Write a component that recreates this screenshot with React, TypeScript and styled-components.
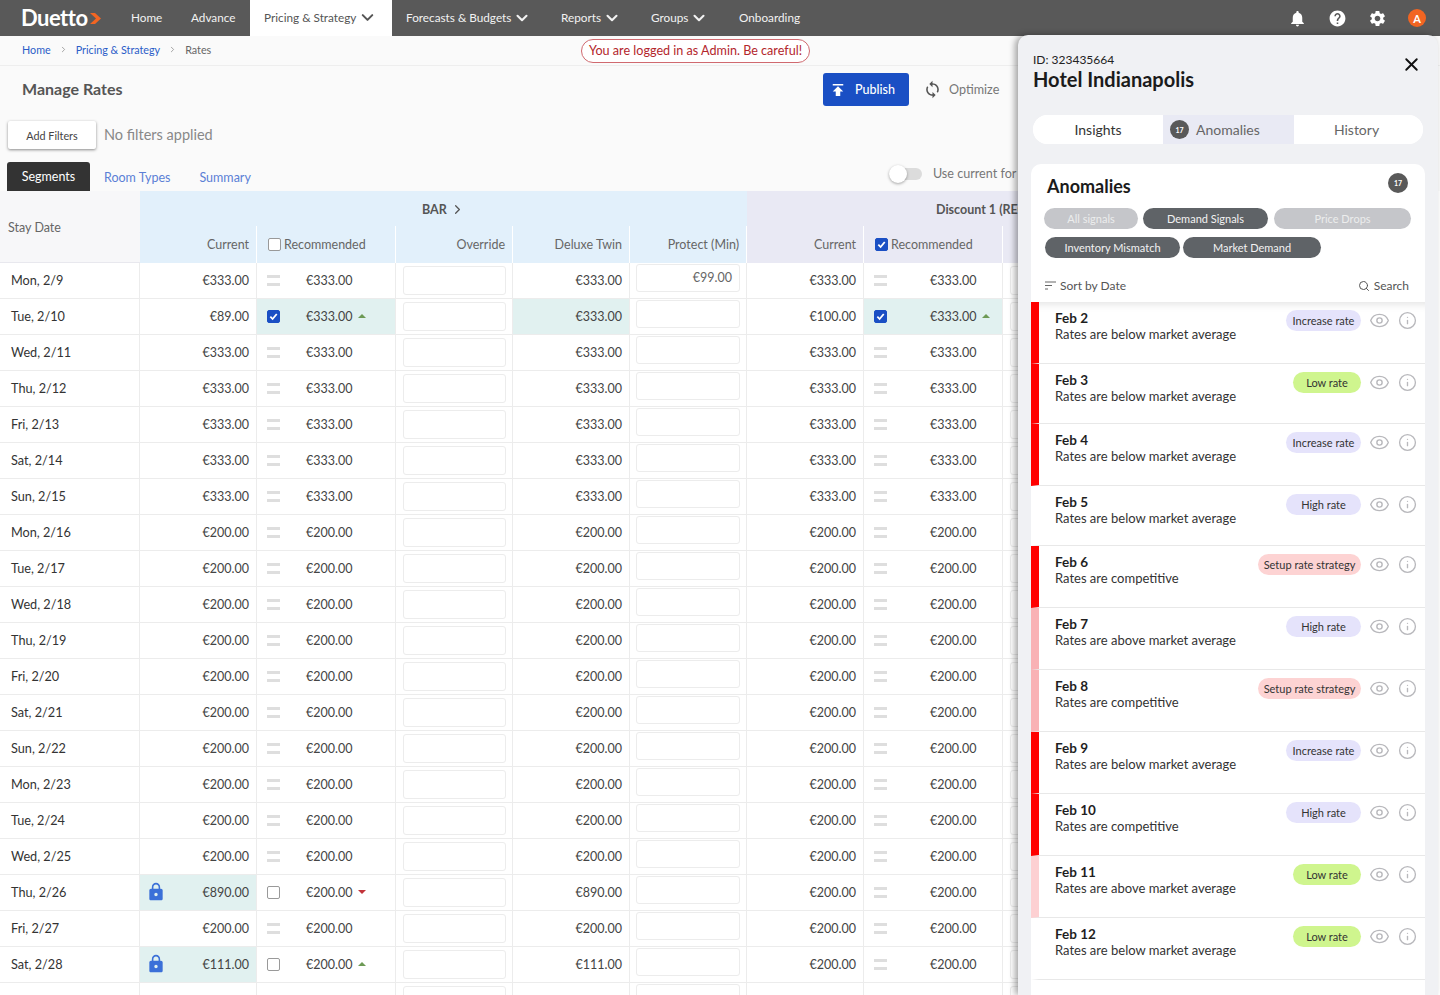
import React from 'react';
import styled, { createGlobalStyle } from 'styled-components';
import { ChevronDown, ChevronRight, Eye, Info, Search, X } from 'lucide-react';
import { MdHelp, MdLock, MdNotifications, MdPublish, MdSettings, MdSync } from 'react-icons/md';

const Global = createGlobalStyle`
  html, body { margin: 0; padding: 0; background: #fafafa; }
  body { font-family: Lato, "Open Sans", sans-serif; color: #333; }
  * { box-sizing: border-box; }
`;
const Page = styled.div`position: relative; width: 1440px; height: 995px; overflow: hidden; background: #fafafa;`;
const TopNav = styled.nav`display: flex; align-items: center; height: 36px; background: #595959; padding-left: 21px; color: #f4f4f4; font-size: 11.75px;`;
const Logo = styled.div`display: flex; align-items: center; width: 96px; font-size: 22px; font-weight: 700; letter-spacing: -0.5px; color: #fff; line-height: 36px;`;
const NavItem = styled.div<{ $active?: boolean; $w: number }>`
  display: flex; align-items: center; gap: 2px; height: 36px; width: ${p => p.$w}px; padding: 0 0 1px 14px;
  background: ${p => (p.$active ? '#fff' : 'transparent')}; color: ${p => (p.$active ? '#555' : '#f2f2f2')};
`;
const NavIcons = styled.div`display: flex; align-items: center; margin-left: auto; margin-right: 14px; gap: 21px; color: #fff;`;
const Avatar = styled.div`width: 18px; height: 18px; border-radius: 50%; background: #f26522; color: #fff; font-size: 11px; font-weight: 700; display: flex; align-items: center; justify-content: center;`;
const CrumbRow = styled.div`display: grid; grid-template-columns: 581px auto; align-items: center; height: 30px; border-bottom: 1px solid #eeeeee;`;
const Crumbs = styled.div`display: flex; align-items: center; padding: 0 0 3px 22px; font-size: 10.75px; color: #666;`;
const CrumbLink = styled.span`color: #2b5dc8;`;
const CrumbSep = styled.span`display: flex; width: 25px; justify-content: center; color: #888;`;
const Banner = styled.div`justify-self: start; height: 24px; padding: 0 7px; border: 1px solid #d0696f; border-radius: 12px; color: #b3262c; font-size: 12.6px; line-height: 22px; background: #fff; white-space: nowrap;`;
const TitleRow = styled.div`display: flex; align-items: center; height: 47px; padding-left: 22px;`;
const Title = styled.h1`margin: 0 0 2px; font-size: 16px; font-weight: 700; color: #555; flex: 0 0 801px;`;
const Publish = styled.button`display: flex; align-items: center; width: 86px; height: 33px; padding: 0 0 0 6px; gap: 8px; border: 0; border-radius: 3px; background: #1a4fc4; color: #fff; font: 500 12.5px Lato, sans-serif;`;
const Optimize = styled.div`display: flex; align-items: center; gap: 7px; margin-left: 14px; font-size: 12.6px; color: #777; svg { color: #555; }`;
const FilterRow = styled.div`display: flex; align-items: center; height: 28px; margin-top: 8px; padding-left: 8px; gap: 8px;`;
const AddFilters = styled.button`width: 88px; height: 28px; border: 0; border-radius: 2px; background: #fff; box-shadow: 0 1px 3px rgba(0,0,0,.45); font: 10.8px Lato, sans-serif; color: #444;`;
const FilterNote = styled.span`font-size: 14.5px; color: #888; margin-bottom: 1px;`;
const TabRow = styled.div`display: flex; align-items: flex-end; height: 30px; margin-top: 12px; padding-left: 7px;`;
const SegTab = styled.div`width: 83px; height: 29px; border-radius: 3px 3px 0 0; background: #333; color: #fff; font-size: 12.5px; display: flex; align-items: center; justify-content: center;`;
const LinkTab = styled.div<{ $ml: number }>`height: 29px; margin-left: ${p => p.$ml}px; color: #5b7fd6; font-size: 12.5px; display: flex; align-items: center; padding-top: 1px;`;
const ToggleWrap = styled.div`display: flex; align-items: center; gap: 11px; height: 29px; margin-left: 638px; font-size: 12.6px; color: #777; white-space: nowrap; padding-bottom: 6px;`;
const Toggle = styled.div`position: relative; width: 33px; height: 12px; border-radius: 6px; background: #dcdcdc;
  &::before { content: ''; position: absolute; left: 0; top: -3px; width: 18px; height: 18px; border-radius: 50%; background: #fff; box-shadow: 0 1px 3px rgba(0,0,0,.35); }
`;
const cols = '140px 117px 139px 117px 117px 117px 117px 139px 117px';
const Table = styled.div`display: grid; grid-template-columns: ${cols}; width: 1440px; background: #fff;`;
const StayHead = styled.div`grid-row: span 2; background: #f7f7f9; color: #666; font-size: 12.5px; display: flex; align-items: center; padding: 1px 0 0 8px; border-bottom: 1px solid #e8e8ee; height: 72px;`;
const GroupHead = styled.div<{ $span: number; $bg: string; $pl: number }>`
  grid-column: span ${p => p.$span}; height: 35px; background: ${p => p.$bg}; display: flex; align-items: center; gap: 3px; padding: 1px 0 0 ${p => p.$pl}px;
  font-size: 12.5px; font-weight: 700; color: #555; white-space: nowrap; overflow: hidden;
`;
const ColHead = styled.div<{ $bg: string; $left?: boolean }>`
  height: 37px; background: ${p => p.$bg}; border-right: 1px solid #fff; display: flex; align-items: center; gap: 3px; font-size: 12.5px; color: #666;
  justify-content: ${p => (p.$left ? 'flex-start' : 'flex-end')}; padding: ${p => (p.$left ? '0 0 1px 11px' : '0 7px 1px 0')}; white-space: nowrap;
`;
const Cell = styled.div<{ $hl?: boolean }>`
  height: 36px; border-bottom: 1px solid #ececec; border-right: 1px solid #ececec; background: ${p => (p.$hl ? '#e1f1f0' : '#fff')};
  display: flex; align-items: center; font-size: 12.5px; color: #444; padding-bottom: 1px;
`;
const DateCell = styled(Cell)`padding-left: 11px; color: #333; font-size: 12.7px;`;
const MoneyCell = styled(Cell)`justify-content: space-between; padding: 0 7px 1px 10px;`;
const RecCell = styled(Cell)`padding-left: 10px;`;
const RecValue = styled.span<{ $ml: number }>`margin-left: ${p => p.$ml}px; width: 47px;`;
const InputCell = styled(Cell)<{ $top: number; $left: number }>`align-items: flex-start; padding: ${p => p.$top}px 6px 0 ${p => p.$left}px;`;
const RateInput = styled.div<{ $h: number }>`width: 100%; height: ${p => p.$h}px; border: 1px solid #ececec; border-radius: 3px; background: #fff; font-size: 12.5px; color: #666; text-align: right; padding: 5px 7px 0 0;`;
const Box = styled.span<{ $on?: boolean }>`
  flex: none; width: 13px; height: 13px; border-radius: 2px; display: inline-flex; align-items: center; justify-content: center;
  background: ${p => (p.$on ? '#1a4fc4' : '#fff')}; border: 1px solid ${p => (p.$on ? '#1a4fc4' : '#999')};
`;
const EqualMark = styled.span`flex: none; width: 13px; height: 11px; border-top: 3px solid #dedede; border-bottom: 3px solid #dedede;`;
const Arrow = styled.span<{ $dir: 'up' | 'down' }>`
  width: 0; height: 0; margin-left: 5px; border-left: 4px solid transparent; border-right: 4px solid transparent;
  ${p => (p.$dir === 'up' ? 'border-bottom: 4px solid #6d9a55;' : 'border-top: 4px solid #c2333a;')}
`;
const LockIcon = styled(MdLock)`color: #3b70d8; flex: none; margin-left: -4px;`;
const Panel = styled.aside`position: absolute; left: 1018px; top: 35px; width: 420px; height: 960px; background: #f0f1f4; border-radius: 10px 10px 0 0; box-shadow: -3px 0 6px rgba(0,0,0,.35); padding: 0 13px;`;
const PanelHead = styled.header`display: flex; justify-content: space-between; padding: 17px 0 0 2px; height: 80px;`;
const HotelId = styled.div`font-size: 12px; line-height: 15px; color: #222;`;
const Hotel = styled.div`font-size: 20px; line-height: 24px; font-weight: 700; color: #1b1b1b;`;
const Close = styled(X)`margin: 2px 3px 0 0; color: #111;`;
const PanelTabs = styled.div`display: grid; grid-template-columns: 130px 131px 129px; height: 29px; margin: 0 2px; border-radius: 15px; overflow: hidden; background: #fff;`;
const PanelTab = styled.div<{ $sel?: boolean; $c: string }>`display: flex; align-items: center; justify-content: center; gap: 7px; font-size: 14px; color: ${p => p.$c}; background: ${p => (p.$sel ? '#e9eaf4' : '#fff')};`;
const AnomalyTab = styled(PanelTab)`justify-content: flex-start; padding-left: 7px;`;
const HistoryTab = styled(PanelTab)`padding-right: 4px;`;
const Count = styled.span<{ $s: number }>`display: inline-flex; flex: none; align-items: center; justify-content: center; width: ${p => p.$s}px; height: ${p => p.$s}px; border-radius: 50%; background: #595959; color: #fff; font-size: 7px; font-weight: 700;`;
const Card = styled.section`height: 840px; margin-top: 20px; background: #fff; border-radius: 10px 10px 0 0; overflow: hidden;`;
const CardHead = styled.div`display: flex; align-items: flex-start; justify-content: space-between; padding: 9px 17px 0 16px; height: 44px;`;
const CardTitle = styled.h2`margin: 1px 0 0; font-size: 18px; line-height: 24px; font-weight: 700; color: #1b1b1b;`;
const Chips = styled.div`display: flex; flex-wrap: wrap; row-gap: 8px; padding-left: 13px; height: 50px;`;
const Chip = styled.div<{ $w: number; $dim?: boolean; $mr: number; $ml?: number }>`
  width: ${p => p.$w}px; margin-right: ${p => p.$mr}px; margin-left: ${p => p.$ml ?? 0}px; height: 21px; border-radius: 11px; background: ${p => (p.$dim ? '#c5c6ca' : '#5f6367')}; color: ${p => (p.$dim ? '#eceded' : '#f2f2f2')};
  display: flex; align-items: center; justify-content: center; font-size: 11px;
`;
const SortRow = styled.div`display: flex; align-items: center; justify-content: space-between; height: 44px; padding: 11px 16px 0 14px; font-size: 12px; color: #555;`;
const SortLabel = styled.div`display: flex; align-items: center; gap: 4px;`;
const RowList = styled.div`box-shadow: inset 0 10px 8px -8px rgba(0,0,0,.12);`;
const ARow = styled.div<{ $stripe: string; $h: number }>`
  display: flex; align-items: flex-start; height: ${p => p.$h}px; border-left: 8px solid ${p => p.$stripe}; border-bottom: 1px solid #e8e8e8; padding: 8px 8px 0 16px;
`;
const RowText = styled.div`flex: 1;`;
const RowDate = styled.div`font-size: 13.5px; line-height: 16px; font-weight: 700; color: #1f1f1f;`;
const RowDesc = styled.div`font-size: 13px; line-height: 16px; color: #333;`;
const Pill = styled.div<{ $bg: string; $w: number }>`
  width: ${p => p.$w}px; height: 21px; margin: 0 8px 0 0; border-radius: 11px; background: ${p => p.$bg}; color: #333; font-size: 11px; display: flex; align-items: center; justify-content: center; white-space: nowrap;
`;
const RowIcons = styled.div`display: flex; align-items: center; gap: 8px; color: #b8b8bc; height: 20px;`;
const LogoMark = styled.svg`margin-left: 1px;`;

type Row = { d: string; c: string; r: string; dt?: string; c2?: string; lock?: boolean; box?: 'on' | 'off'; arrow?: 'up' | 'down'; hlDeluxe?: boolean; protect?: string };
const dates333 = ['Mon, 2/9', 'Tue, 2/10', 'Wed, 2/11', 'Thu, 2/12', 'Fri, 2/13', 'Sat, 2/14', 'Sun, 2/15'];
const dates200 = ['Mon, 2/16', 'Tue, 2/17', 'Wed, 2/18', 'Thu, 2/19', 'Fri, 2/20', 'Sat, 2/21', 'Sun, 2/22', 'Mon, 2/23', 'Tue, 2/24', 'Wed, 2/25', 'Thu, 2/26', 'Fri, 2/27', 'Sat, 2/28', 'Sun, 3/1'];
const rows: Row[] = [
  ...dates333.map(d => ({ d, c: '€333.00', r: '€333.00' } as Row)),
  ...dates200.map(d => ({ d, c: '€200.00', r: '€200.00' } as Row)),
];
rows[0].protect = '€99.00';
Object.assign(rows[1], { c: '€89.00', c2: '€100.00', dt: '€333.00', box: 'on', arrow: 'up', hlDeluxe: true });
Object.assign(rows[17], { c: '€890.00', c2: '€200.00', dt: '€890.00', box: 'off', arrow: 'down', lock: true });
Object.assign(rows[19], { c: '€111.00', c2: '€200.00', dt: '€111.00', box: 'off', arrow: 'up', lock: true });

const Check = () => (
  <svg width="9" height="9" viewBox="0 0 10 10"><path d="M1.5 5.2 4 7.8 8.6 2.2" fill="none" stroke="#fff" strokeWidth="2" /></svg>
);

const TableRow = ({ row, i }: { row: Row; i: number }) => {
  const second = i === 1;
  return (
    <>
      <DateCell>{row.d}</DateCell>
      <MoneyCell $hl={row.lock}>
        {row.lock ? <LockIcon size={20} /> : <span />}
        {row.c}
      </MoneyCell>
      <RecCell $hl={second}>
        {row.box ? <Box $on={row.box === 'on'}>{row.box === 'on' && <Check />}</Box> : <EqualMark />}
        <RecValue $ml={26}>{row.r}</RecValue>
        {row.arrow && <Arrow $dir={row.arrow} />}
      </RecCell>
      <InputCell $top={3} $left={7}><RateInput $h={29} /></InputCell>
      <MoneyCell $hl={row.hlDeluxe}><span />{row.dt ?? row.c}</MoneyCell>
      <InputCell $top={1} $left={6}><RateInput $h={28}>{row.protect}</RateInput></InputCell>
      <MoneyCell><span />{row.c2 ?? row.c}</MoneyCell>
      <RecCell $hl={second}>
        {second ? <Box $on><Check /></Box> : <EqualMark />}
        <RecValue $ml={43}>{row.r}</RecValue>
        {second && <Arrow $dir="up" />}
      </RecCell>
      <InputCell $top={3} $left={7}><RateInput $h={29} /></InputCell>
    </>
  );
};

const RED = '#ff0000', PINK = '#f9b2b5', PALE = '#fdd0d2';
const INC = '#e5e3fb', LOW = '#cff58e', SET = '#fdd3d3';
const anomalies = [
  { d: 'Feb 2', t: 'Rates are below market average', p: 'Increase rate', bg: INC, w: 75, s: RED, h: 62 },
  { d: 'Feb 3', t: 'Rates are below market average', p: 'Low rate', bg: LOW, w: 68, s: RED, h: 60 },
  { d: 'Feb 4', t: 'Rates are below market average', p: 'Increase rate', bg: INC, w: 75, s: RED, h: 62 },
  { d: 'Feb 5', t: 'Rates are below market average', p: 'High rate', bg: INC, w: 75, s: '#fff', h: 60 },
  { d: 'Feb 6', t: 'Rates are competitive', p: 'Setup rate strategy', bg: SET, w: 103, s: RED, h: 62 },
  { d: 'Feb 7', t: 'Rates are above market average', p: 'High rate', bg: INC, w: 75, s: PINK, h: 62 },
  { d: 'Feb 8', t: 'Rates are competitive', p: 'Setup rate strategy', bg: SET, w: 103, s: PINK, h: 62 },
  { d: 'Feb 9', t: 'Rates are below market average', p: 'Increase rate', bg: INC, w: 75, s: RED, h: 62 },
  { d: 'Feb 10', t: 'Rates are competitive', p: 'High rate', bg: INC, w: 75, s: RED, h: 62 },
  { d: 'Feb 11', t: 'Rates are above market average', p: 'Low rate', bg: LOW, w: 68, s: PALE, h: 62 },
  { d: 'Feb 12', t: 'Rates are below market average', p: 'Low rate', bg: LOW, w: 68, s: '#fff', h: 62 },
];

export default function App() {
  return (
    <Page>
      <Global />
      <TopNav>
        <Logo>Duetto<LogoMark width="14" height="13" viewBox="0 0 14 13"><path d="M1 1h5l6 5.5L6 12H1l6-5.5z" fill="#f26522" /></LogoMark></Logo>
        <NavItem $w={60}>Home</NavItem>
        <NavItem $w={73}>Advance</NavItem>
        <NavItem $w={142} $active>Pricing &amp; Strategy <ChevronDown size={19} strokeWidth={2.6} /></NavItem>
        <NavItem $w={155}>Forecasts &amp; Budgets <ChevronDown size={18} strokeWidth={2.8} /></NavItem>
        <NavItem $w={90}>Reports <ChevronDown size={18} strokeWidth={2.8} /></NavItem>
        <NavItem $w={88}>Groups <ChevronDown size={18} strokeWidth={2.8} /></NavItem>
        <NavItem $w={90}>Onboarding</NavItem>
        <NavIcons>
          <MdNotifications size={19} />
          <MdHelp size={19} />
          <MdSettings size={19} />
          <Avatar>A</Avatar>
        </NavIcons>
      </TopNav>
      <CrumbRow>
        <Crumbs>
          <CrumbLink>Home</CrumbLink><CrumbSep><ChevronRight size={9} /></CrumbSep>
          <CrumbLink>Pricing &amp; Strategy</CrumbLink><CrumbSep><ChevronRight size={9} /></CrumbSep>
          Rates
        </Crumbs>
        <Banner>You are logged in as Admin. Be careful!</Banner>
      </CrumbRow>
      <TitleRow>
        <Title>Manage Rates</Title>
        <Publish><MdPublish size={18} /> Publish</Publish>
        <Optimize><MdSync size={19} /> Optimize</Optimize>
      </TitleRow>
      <FilterRow>
        <AddFilters>Add Filters</AddFilters>
        <FilterNote>No filters applied</FilterNote>
      </FilterRow>
      <TabRow>
        <SegTab>Segments</SegTab>
        <LinkTab $ml={14}>Room Types</LinkTab>
        <LinkTab $ml={29}>Summary</LinkTab>
        <ToggleWrap><Toggle />Use current for all</ToggleWrap>
      </TabRow>
      <Table>
        <StayHead>Stay Date</StayHead>
        <GroupHead $span={5} $bg="#e2f0fb" $pl={282}>BAR <ChevronRight size={15} /></GroupHead>
        <GroupHead $span={3} $bg="#e9e9f4" $pl={189}>Discount 1 (RECOMMENDED)</GroupHead>
        <ColHead $bg="#e2f0fb">Current</ColHead>
        <ColHead $bg="#e2f0fb" $left><Box />Recommended</ColHead>
        <ColHead $bg="#e2f0fb">Override</ColHead>
        <ColHead $bg="#e2f0fb">Deluxe Twin</ColHead>
        <ColHead $bg="#e2f0fb">Protect (Min)</ColHead>
        <ColHead $bg="#e9e9f4">Current</ColHead>
        <ColHead $bg="#e9e9f4" $left><Box $on><Check /></Box>Recommended</ColHead>
        <ColHead $bg="#e9e9f4" />
        {rows.map((row, i) => <TableRow key={row.d} row={row} i={i} />)}
      </Table>
      <Panel>
        <PanelHead>
          <div>
            <HotelId>ID: 323435664</HotelId>
            <Hotel>Hotel Indianapolis</Hotel>
          </div>
          <Close size={21} strokeWidth={2.2} />
        </PanelHead>
        <PanelTabs>
          <PanelTab $c="#333">Insights</PanelTab>
          <AnomalyTab $sel $c="#666"><Count $s={19}>17</Count>Anomalies</AnomalyTab>
          <HistoryTab $c="#666">History</HistoryTab>
        </PanelTabs>
        <Card>
          <CardHead>
            <CardTitle>Anomalies</CardTitle>
            <Count $s={20}>17</Count>
          </CardHead>
          <Chips>
            <Chip $w={94} $mr={5} $dim>All signals</Chip>
            <Chip $w={125} $mr={6}>Demand Signals</Chip>
            <Chip $w={137} $mr={0} $dim>Price Drops</Chip>
            <Chip $w={135} $mr={3} $ml={1}>Inventory Mismatch</Chip>
            <Chip $w={138} $mr={0}>Market Demand</Chip>
          </Chips>
          <SortRow>
            <SortLabel>
              <svg width="11" height="9" viewBox="0 0 11 9"><path d="M0 1h11M0 4.5h7M0 8h3" stroke="#666" strokeWidth="1" /></svg>
              Sort by Date
            </SortLabel>
            <SortLabel><Search size={12} />Search</SortLabel>
          </SortRow>
          <RowList>
            {anomalies.map(a => (
              <ARow key={a.d} $stripe={a.s} $h={a.h}>
                <RowText>
                  <RowDate>{a.d}</RowDate>
                  <RowDesc>{a.t}</RowDesc>
                </RowText>
                <Pill $bg={a.bg} $w={a.w}>{a.p}</Pill>
                <RowIcons>
                  <Eye size={21} strokeWidth={1.6} />
                  <Info size={19} strokeWidth={1.7} />
                </RowIcons>
              </ARow>
            ))}
          </RowList>
        </Card>
      </Panel>
    </Page>
  );
}
